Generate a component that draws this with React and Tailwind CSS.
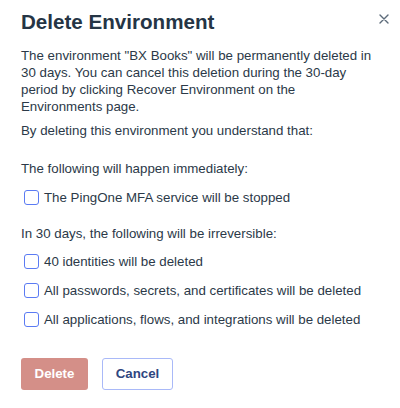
import React from 'react';

const font = "font-['Liberation_Sans',Arial,sans-serif]";

function Check({ children, className = '' }) {
  return (
    <label className={`flex items-center h-[17px] ${className}`}>
      <span className="ml-[3px] mr-[5px] w-[15px] h-[15px] rounded-[3px] border-[1.5px] border-[#5b7bf3] bg-white shrink-0" />
      <span>{children}</span>
    </label>
  );
}

export default function App() {
  return (
    <div className={`w-[400px] h-[408px] bg-white px-[21px] pt-[10px] text-[13.3px] text-[#2b3948] ${font}`}>
      {/* Header */}
      <div className="flex items-start justify-between">
        <h2 className="text-[20.6px] leading-[24px] font-bold text-[#253545]">Delete Environment</h2>
        <button className="-mr-[10px] mt-[4px] w-[10px] h-[10px] text-[#5d6b7a]" aria-label="Close">
          <svg viewBox="0 0 10 10" width="10" height="10" stroke="currentColor" strokeWidth="1.4" strokeLinecap="round">
            <path d="M1 1L9 9M9 1L1 9" />
          </svg>
        </button>
      </div>

      <p className="mt-[13px] leading-[17px]">
        The environment "BX Books" will be permanently deleted in 30 days. You can cancel this deletion during the 30-day
        period by clicking Recover Environment on the Environments page.
      </p>

      <p className="mt-[7px] leading-[17px]">By deleting this environment you understand that:</p>

      <p className="mt-[21px] leading-[17px]">The following will happen immediately:</p>
      <Check className="mt-[12px]">The PingOne MFA service will be stopped</Check>

      <p className="mt-[19px] leading-[17px]">In 30 days, the following will be irreversible:</p>
      <Check className="mt-[11px]">40 identities will be deleted</Check>
      <Check className="mt-[12px]">All passwords, secrets, and certificates will be deleted</Check>
      <Check className="mt-[12px]">All applications, flows, and integrations will be deleted</Check>

      {/* Actions */}
      <div className="mt-[30px] flex gap-[14px]">
        <button className="w-[67px] h-[32px] rounded-[3px] bg-[#d48f88] text-white font-bold text-[13.3px]">
          Delete
        </button>
        <button className="w-[71px] h-[32px] rounded-[3px] border border-[#a9b9f8] bg-white text-[#2f4680] font-bold text-[13.3px]">
          Cancel
        </button>
      </div>
    </div>
  );
}
